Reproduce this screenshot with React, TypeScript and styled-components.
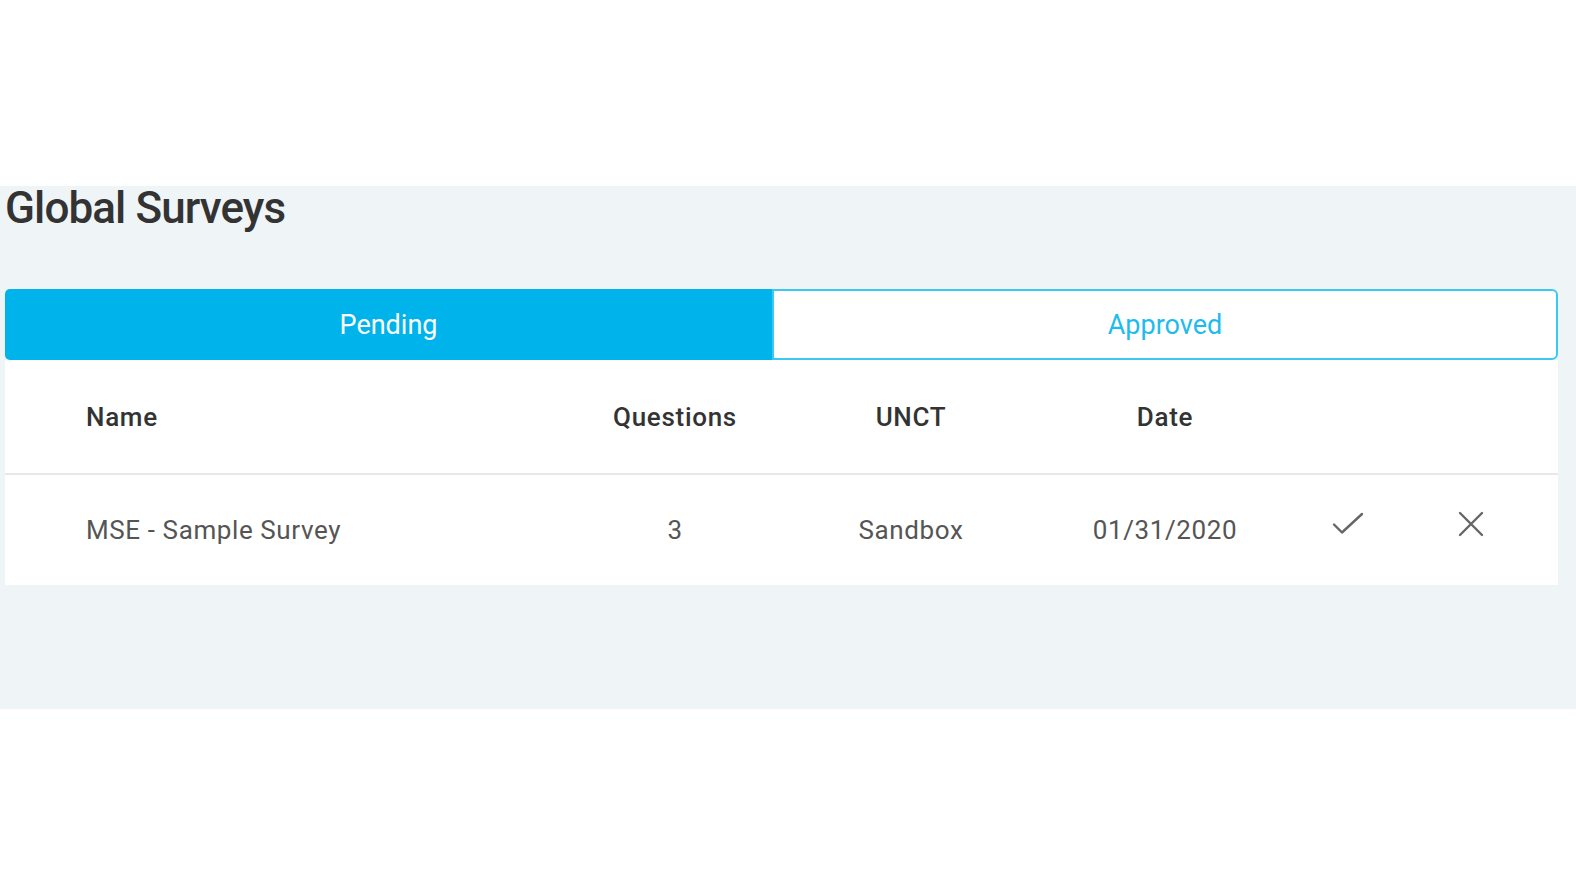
import { useState } from "react";
import styled, { createGlobalStyle } from "styled-components";

const GlobalStyle = createGlobalStyle`
  html, body {
    margin: 0;
    padding: 0;
    background: #ffffff;
    font-family: Roboto, "Liberation Sans", Arial, sans-serif;
  }
`;

type Survey = {
  name: string;
  questions: number;
  unct: string;
  date: string;
};

const surveys: Survey[] = [
  { name: "MSE - Sample Survey", questions: 3, unct: "Sandbox", date: "01/31/2020" },
];

function App() {
  const [tab, setTab] = useState<"pending" | "approved">("pending");

  return (
    <Page>
      <GlobalStyle />
      <Panel>
        <Title>Global Surveys</Title>
        <Tabs>
          <Tab $active={tab === "pending"} onClick={() => setTab("pending")}>
            Pending
          </Tab>
          <Tab $active={tab === "approved"} onClick={() => setTab("approved")}>
            Approved
          </Tab>
        </Tabs>
        <Card>
          <HeadRow>
            <HeadCell>Name</HeadCell>
            <HeadCell $center>Questions</HeadCell>
            <HeadCell $center>UNCT</HeadCell>
            <HeadCell $center>Date</HeadCell>
            <HeadCell />
            <HeadCell />
          </HeadRow>
          {surveys.map((s, i) => (
            <BodyRow key={i}>
              <Cell>{s.name}</Cell>
              <Cell $center>{s.questions}</Cell>
              <Cell $center>{s.unct}</Cell>
              <Cell $center>{s.date}</Cell>
              <IconCell>
                <IconButton aria-label="approve">
                  <svg width="32" height="24" viewBox="0 0 32 24" fill="none">
                    <path
                      d="M2 12.5 L10 20.5 L30 2"
                      stroke="#666"
                      strokeWidth="2.4"
                      strokeLinecap="round"
                      strokeLinejoin="round"
                    />
                  </svg>
                </IconButton>
              </IconCell>
              <IconCell>
                <IconButton aria-label="reject">
                  <svg width="26" height="26" viewBox="0 0 26 26" fill="none">
                    <path
                      d="M2 2 L24 24 M24 2 L2 24"
                      stroke="#666"
                      strokeWidth="2.4"
                      strokeLinecap="round"
                    />
                  </svg>
                </IconButton>
              </IconCell>
            </BodyRow>
          ))}
        </Card>
      </Panel>
    </Page>
  );
}

export default App;

const Page = styled.main`
  padding-top: 186px;
  min-height: 896px;
  box-sizing: border-box;
`;

const Panel = styled.section`
  background: #eff4f7;
  padding: 0 18px 124px 5px;
  display: flex;
  flex-direction: column;
`;

const Title = styled.h1`
  margin: 0 0 59px;
  font-size: 44px;
  line-height: 44px;
  font-weight: 500;
  color: #333333;
  letter-spacing: -0.9px;
`;

const Tabs = styled.div`
  display: grid;
  grid-template-columns: 767px 1fr;
  height: 71px;
`;

const Tab = styled.button<{ $active?: boolean }>`
  font-family: inherit;
  font-size: 27px;
  font-weight: 400;
  cursor: pointer;
  padding: 0;
  margin: 0;
  ${({ $active }) =>
    $active
      ? `
    background: #00b3eb;
    color: #ffffff;
    border: none;
    border-radius: 5px 0 0 5px;
  `
      : `
    background: #ffffff;
    color: #1ebcee;
    border: 2px solid #3cc9f1;
    border-radius: 0 6px 6px 0;
  `}
`;

const Card = styled.div`
  background: #ffffff;
  display: flex;
  flex-direction: column;
`;

const Row = styled.div`
  display: grid;
  grid-template-columns: 499px 180px 292px 216px 150px 96px;
  padding-left: 81px;
  align-items: center;
`;

const HeadRow = styled(Row)`
  height: 113px;
  border-bottom: 2px solid #e8e8e8;
`;

const BodyRow = styled(Row)`
  height: 110px;
`;

const HeadCell = styled.div<{ $center?: boolean }>`
  font-size: 26px;
  font-weight: 500;
  color: #333333;
  letter-spacing: 0.7px;
  text-align: ${({ $center }) => ($center ? "center" : "left")};
`;

const Cell = styled.div<{ $center?: boolean }>`
  font-size: 26px;
  font-weight: 400;
  color: #555555;
  letter-spacing: 0.6px;
  text-align: ${({ $center }) => ($center ? "center" : "left")};
`;

const IconCell = styled.div`
  display: flex;
  justify-content: center;
  padding-bottom: 12px;
`;

const IconButton = styled.button`
  background: none;
  border: none;
  padding: 0;
  cursor: pointer;
  display: flex;
`;
